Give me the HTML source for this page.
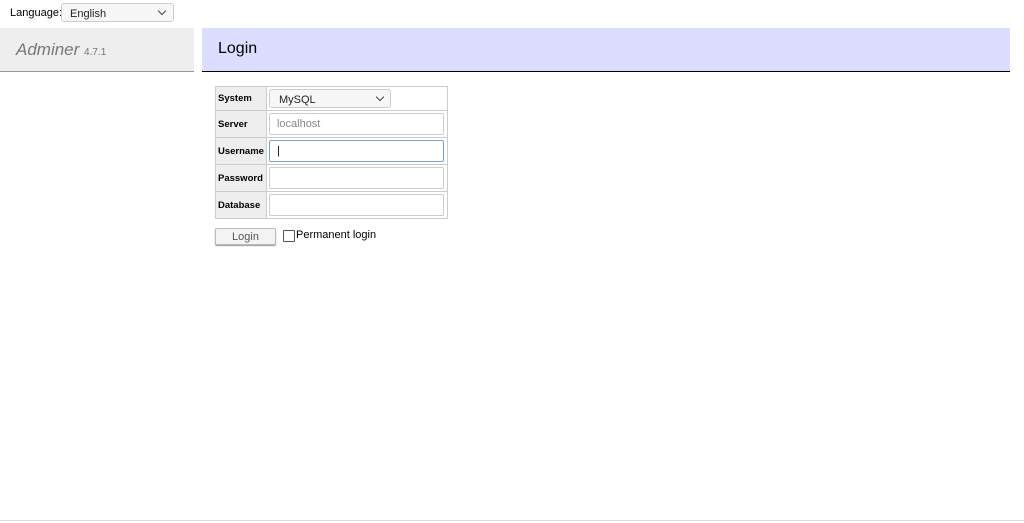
<!DOCTYPE html>
<html><head><style>
body{margin:0;width:1024px;height:523px;background:#fff;font-family:"Liberation Sans",sans-serif;position:relative;overflow:hidden}
.a{position:absolute}
.sel{border:1px solid #ccc;border-radius:3px;background:#f7f7f7;font-size:11px;color:#222;box-sizing:border-box}
.chev{position:absolute;width:5px;height:5px;border-right:1.3px solid #444;border-bottom:1.3px solid #444;transform:rotate(45deg)}
th{font-size:9.5px;font-weight:bold;text-align:left;background:#eee;border:1px solid #ccc;padding:0 2px;color:#000}
td{border:1px solid #ccc;padding:0 2px}
table{border-collapse:collapse}
.in{height:22px;border:1px solid #ccc;border-radius:2px;box-sizing:border-box;width:175px;font-size:11px;color:#888;padding-left:7px;line-height:20px}
</style></head><body>
<div class="a" style="left:10px;top:7px;font-size:11px;color:#000">Language:</div>
<div class="a sel" style="left:61px;top:3px;width:113px;height:19px;padding:4px 8px">English<span class="chev" style="left:97px;top:4px"></span></div>
<div class="a" style="left:0;top:28px;width:194px;height:43px;background:#eee;border-bottom:1px solid #999"></div>
<div class="a" style="left:16px;top:40px;font-size:17px;font-style:italic;color:#777">Adminer <span style="font-size:10px;font-style:normal">4.7.1</span></div>
<div class="a" style="left:202px;top:28px;width:808px;height:43px;background:#ddf;border-bottom:1px solid #000"></div>
<div class="a" style="left:218px;top:40px;font-size:16px;color:#000">Login</div>
<table class="a" style="left:215px;top:86px;width:233px">
<tr style="height:24px"><th style="width:45px">System</th><td><div class="sel" style="width:122px;height:19px;padding:4px 9px;position:relative">MySQL<span class="chev" style="left:107px;top:4px"></span></div></td></tr>
<tr style="height:27px"><th>Server</th><td><div class="in">localhost</div></td></tr>
<tr style="height:27px"><th>Username</th><td><div class="in" style="border-color:#7aa3cc;color:#000">|</div></td></tr>
<tr style="height:27px"><th>Password</th><td><div class="in"></div></td></tr>
<tr style="height:27px"><th>Database</th><td><div class="in"></div></td></tr>
</table>
<div class="a" style="left:215px;top:228px;width:61px;height:17px;border:1px solid #bbb;border-radius:2px;background:#f3f3f3;box-sizing:border-box;font-size:11px;color:#555;text-align:center;line-height:16px;box-shadow:0 1px 1px #999">Login</div>
<div class="a" style="left:283px;top:230px;width:10px;height:10px;border:1px solid #555;border-radius:1px"></div>
<div class="a" style="left:296px;top:229px;font-size:11px;color:#000">Permanent login</div>
<div class="a" style="left:0;top:520px;width:1024px;height:1px;background:#ddd"></div>
</body></html>
